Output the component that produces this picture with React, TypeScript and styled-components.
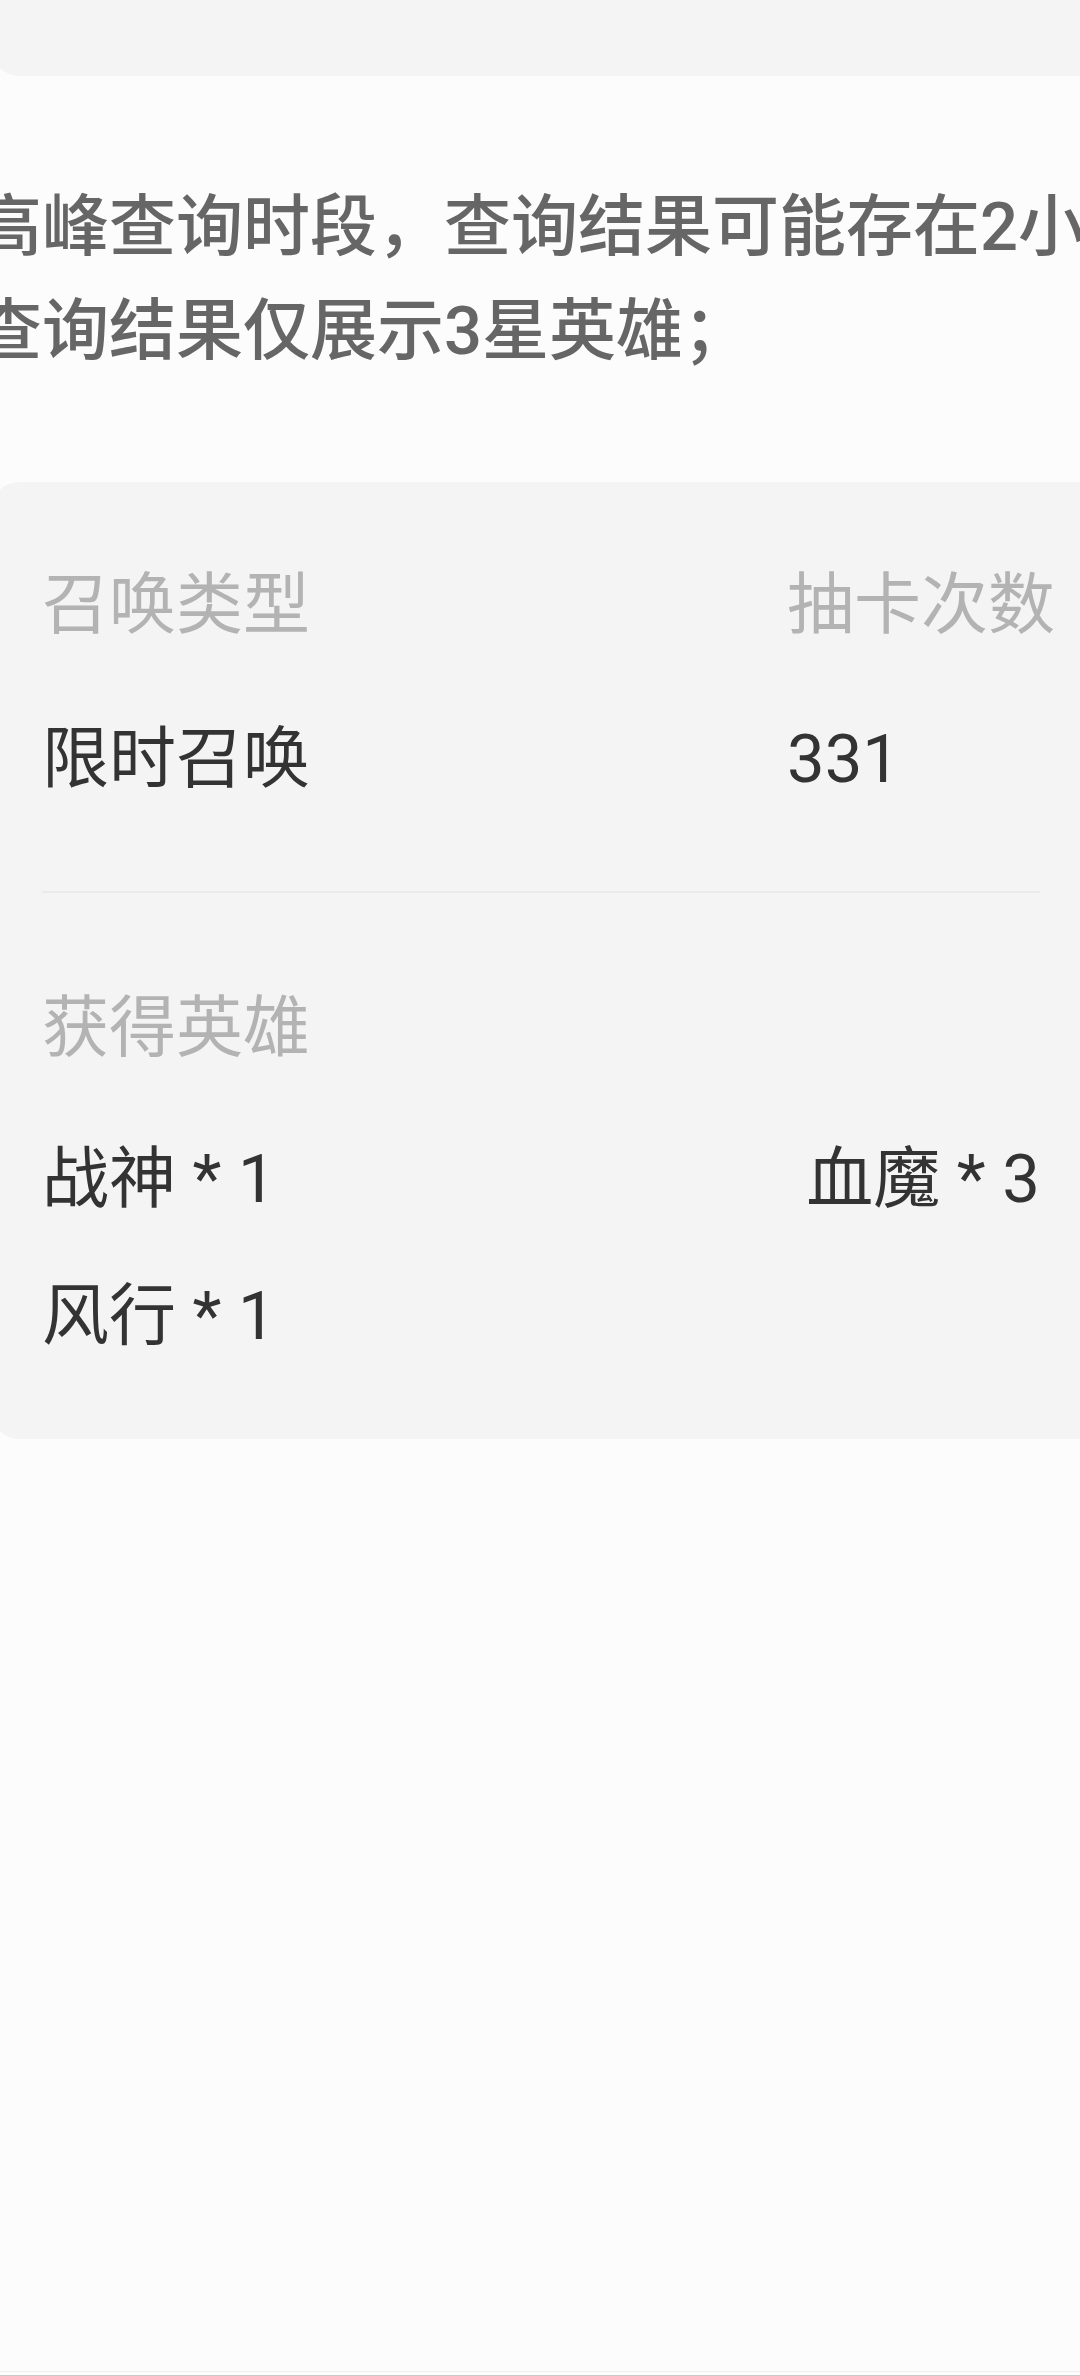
import React from "react";
import styled, { createGlobalStyle } from "styled-components";

const GlobalStyle = createGlobalStyle`
  html, body {
    margin: 0;
    padding: 0;
    background: #fcfcfc;
    overflow-x: hidden;
  }
  body {
    font-family: Roboto, "Noto Sans CJK SC", "Noto Sans", sans-serif;
  }
`;

const Page = styled.div`
  display: flex;
  flex-direction: column;
  align-items: flex-start;
  min-height: 100vh;
  overflow: hidden;
  background: #fcfcfc;
`;

const TopCard = styled.div`
  flex-shrink: 0;
  width: 1140px;
  height: 76px;
  margin-left: -10px;
  background: #f4f4f4;
  border-radius: 0 0 30px 30px;
`;

const Notice = styled.div`
  margin: 99px 0 0 -25px;
  display: flex;
  flex-direction: column;
`;

const NoticeLine = styled.p`
  margin: 0;
  font-size: 67px;
  line-height: 104px;
  font-weight: 500;
  color: #666666;
  white-space: nowrap;
`;

const Card = styled.section`
  flex-shrink: 0;
  box-sizing: border-box;
  width: 1140px;
  margin: 99px 0 0 -10px;
  padding: 73px 90px 73px 52px;
  background: #f4f4f4;
  border-radius: 30px;
  display: flex;
  flex-direction: column;
`;

const SummaryGrid = styled.div`
  display: grid;
  grid-template-columns: 745px 1fr;
  row-gap: 54px;
`;

const Text = styled.span<{ $muted?: boolean }>`
  font-size: 67px;
  line-height: 100px;
  color: ${(p) => (p.$muted ? "#b3b3b3" : "#333333")};
  white-space: nowrap;
`;

const Divider = styled.div`
  height: 2px;
  margin: 82px 0 85px;
  background: #ebebeb;
`;

const HeroSection = styled.div`
  display: flex;
  flex-direction: column;
  gap: 51px;
`;

const HeroList = styled.div`
  display: grid;
  grid-template-columns: 1fr auto;
  row-gap: 37px;
`;

const Footer = styled.div`
  margin-top: auto;
  align-self: stretch;
  height: 5px;
  box-sizing: border-box;
  border-top: 1px solid #f0f0f0;
  border-bottom: 1px solid #c8c8c8;
`;

const heroes = [
  { name: "战神", count: 1 },
  { name: "血魔", count: 3 },
  { name: "风行", count: 1 },
];

export default function App() {
  return (
    <>
      <GlobalStyle />
      <Page>
        <TopCard />
        <Notice>
          <NoticeLine>高峰查询时段，查询结果可能存在2小时延迟；</NoticeLine>
          <NoticeLine>查询结果仅展示3星英雄；</NoticeLine>
        </Notice>
        <Card>
          <SummaryGrid>
            <Text $muted>召唤类型</Text>
            <Text $muted>抽卡次数</Text>
            <Text>限时召唤</Text>
            <Text>331</Text>
          </SummaryGrid>
          <Divider />
          <HeroSection>
            <Text $muted>获得英雄</Text>
            <HeroList>
              {heroes.map((h) => (
                <Text key={h.name}>
                  {h.name} * {h.count}
                </Text>
              ))}
            </HeroList>
          </HeroSection>
        </Card>
        <Footer />
      </Page>
    </>
  );
}
